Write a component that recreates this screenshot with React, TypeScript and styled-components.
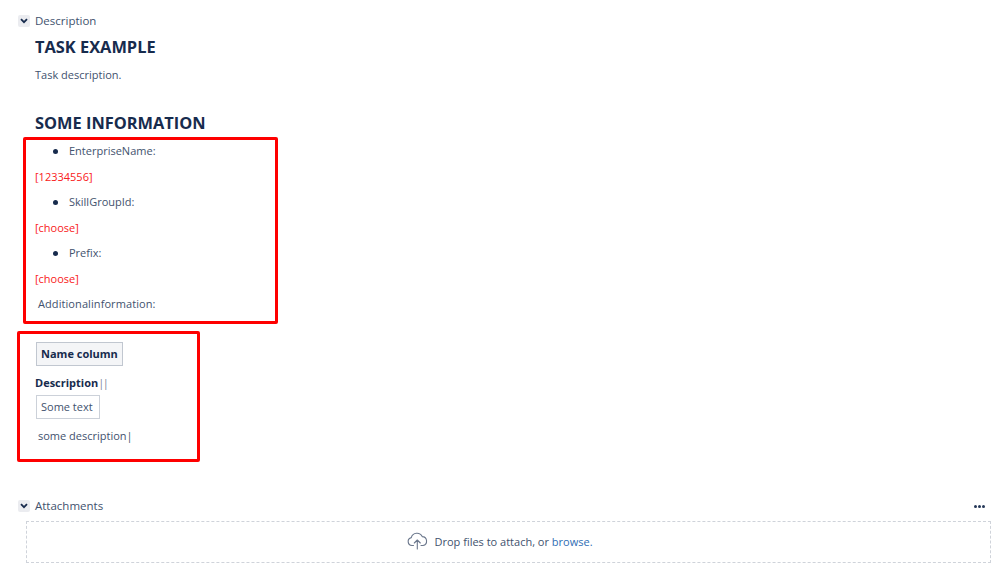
import React from 'react';
import styled, { createGlobalStyle } from 'styled-components';

const Global = createGlobalStyle`
  html, body { margin: 0; padding: 0; background: #fff; }
  body { font-family: "Open Sans", "Noto Sans", sans-serif; font-size: 11px; color: #42526e; }
`;

const Page = styled.div`
  width: 998px;
  height: 575px;
  overflow: hidden;
  padding-top: 14px;
  box-sizing: border-box;
`;

const SectionHeader = styled.div<{ $top?: number }>`
  display: flex;
  align-items: center;
  height: 13px;
  padding-left: 18px;
  padding-right: 13px;
  margin-top: ${p => p.$top ?? 0}px;
`;

const Toggle = styled.span`
  width: 12px;
  height: 12px;
  border-radius: 2px;
  background: #ebecf0;
  display: flex;
  align-items: center;
  justify-content: center;
  margin-right: 5px;
  color: #172b4d;
`;

const SectionTitle = styled.span`
  font-size: 11.5px;
  line-height: 13px;
  color: #42526e;
  flex: 1;
`;

const Dots = styled.span`
  display: flex;
  gap: 1px;
  margin-top: 2px;
`;

const Dot = styled.i`
  width: 3px;
  height: 3px;
  border-radius: 50%;
  background: #253858;
`;

const Content = styled.div`
  padding-left: 35px;
`;

const Heading = styled.h2<{ $top: number }>`
  margin: ${p => p.$top}px 0 0;
  font-size: 16.4px;
  line-height: 22px;
  font-weight: 700;
  color: #172b4d;
`;

const Para = styled.p`
  margin: 6px 0 0;
  line-height: 22px;
  font-size: 11px;
`;

const MarkBox = styled.div<{ $left: number; $width: number; $height: number; $top: number }>`
  box-sizing: border-box;
  margin-left: ${p => p.$left}px;
  margin-top: ${p => p.$top}px;
  width: ${p => p.$width}px;
  height: ${p => p.$height}px;
  border: 3px solid #fe0000;
  border-radius: 2px;
  display: flex;
  flex-direction: column;
`;

const Fields = styled(MarkBox)`
  padding-left: 9px;
  gap: 3.5px;
`;

const Line = styled.div`
  line-height: 22px;
  height: 22px;
`;

const Bullet = styled(Line)`
  display: flex;
  align-items: center;
  padding-left: 18px;
  &::before {
    content: '';
    width: 5px;
    height: 5px;
    border-radius: 50%;
    background: #172b4d;
    margin-right: 11px;
  }
`;

const RedLine = styled(Line)`
  color: #f92020;
`;

const Plain = styled(Line)`
  padding-left: 3px;
  letter-spacing: 0.08px;
`;

const TableBlock = styled(MarkBox)`
  padding-left: 15px;
  align-items: flex-start;
  padding-top: 8px;
`;

const Cell = styled.div<{ $head?: boolean }>`
  box-sizing: border-box;
  height: 24px;
  margin-left: 1px;
  padding: 0 ${p => (p.$head ? 4 : 6)}px 0 4px;
  line-height: 22px;
  border: 1px solid ${p => (p.$head ? '#c1c7d0' : '#ccd1d9')};
  background: ${p => (p.$head ? '#f4f5f7' : '#fff')};
  color: ${p => (p.$head ? '#172b4d' : '#42526e')};
  font-weight: ${p => (p.$head ? 700 : 400)};
`;

const BoldLine = styled(Line)`
  margin-top: 6px;
  font-weight: 700;
  color: #172b4d;
  height: 23px;
  span { font-weight: 400; color: #7a869a; letter-spacing: -1.5px; }
`;

const DescLine = styled(Line)`
  margin-top: 6px;
  padding-left: 3px;
`;

const DropZone = styled.div`
  box-sizing: border-box;
  margin: 9px 0 0 26px;
  width: 965px;
  height: 42px;
  border: 1px dashed #cfd3da;
  padding: 0 17px 2px 0;
  display: flex;
  align-items: center;
  justify-content: center;
  gap: 6px;
`;

const Link = styled.a`
  color: #2f6eb5;
  text-decoration: none;
`;

const Chevron = () => (
  <svg width="8" height="6" viewBox="0 0 8 6" fill="none" stroke="currentColor" strokeWidth="1.8">
    <path d="M1 1.2 4 4.2 7 1.2" />
  </svg>
);

const CloudIcon = () => (
  <svg width="21" height="18" viewBox="0 0 21 18" fill="none" stroke="#6b778c" strokeWidth="1.1" strokeLinecap="round" strokeLinejoin="round">
    <path d="M6.5 13.5H5A4 4 0 0 1 4.3 5.6 5.8 5.8 0 0 1 15.2 4.6 4.5 4.5 0 0 1 16 13.5H14" />
    <path d="M10.3 17V8M7.3 11 10.3 8 13.3 11" />
  </svg>
);

export default function App() {
  return (
    <Page>
      <Global />
      <SectionHeader>
        <Toggle><Chevron /></Toggle>
        <SectionTitle>Description</SectionTitle>
      </SectionHeader>
      <Content>
        <Heading $top={9}>TASK EXAMPLE</Heading>
        <Para>Task description.</Para>
        <Heading $top={26}>SOME INFORMATION</Heading>
      </Content>
      <Fields $left={23} $width={255} $height={187} $top={3}>
        <Bullet>EnterpriseName:</Bullet>
        <RedLine>[12334556]</RedLine>
        <Bullet>SkillGroupId:</Bullet>
        <RedLine>[choose]</RedLine>
        <Bullet>Prefix:</Bullet>
        <RedLine>[choose]</RedLine>
        <Plain>Additionalinformation:</Plain>
      </Fields>
      <TableBlock $left={17} $width={183} $height={131} $top={7}>
        <Cell $head>Name column</Cell>
        <BoldLine>Description<span>||</span></BoldLine>
        <Cell>Some text</Cell>
        <DescLine>some description|</DescLine>
      </TableBlock>
      <SectionHeader $top={37}>
        <Toggle><Chevron /></Toggle>
        <SectionTitle>Attachments</SectionTitle>
        <Dots><Dot /><Dot /><Dot /></Dots>
      </SectionHeader>
      <DropZone>
        <CloudIcon />
        <span>Drop files to attach, or <Link href="#">browse.</Link></span>
      </DropZone>
    </Page>
  );
}
